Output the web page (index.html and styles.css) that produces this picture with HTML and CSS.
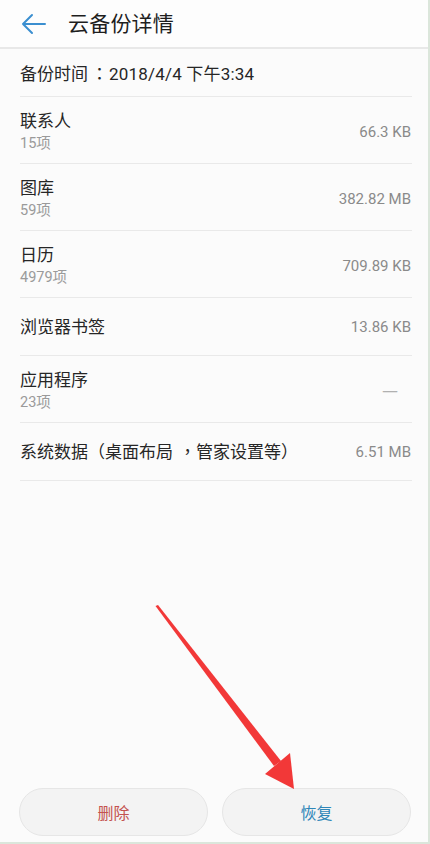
FILE: index.html
```html
<!DOCTYPE html>
<html lang="zh-CN">
<head>
<meta charset="utf-8">
<link rel="stylesheet" href="styles.css">
</head>
<body>
<div class="page">
  <header class="topbar">
    <svg class="back" width="26" height="22" viewBox="0 0 26 22">
      <path d="M3 11 H25 M12 2 L3 11 L12 20" fill="none" stroke="#3b8fd0" stroke-width="2" stroke-linecap="round" stroke-linejoin="round"/>
    </svg>
    <h1 class="title">云备份详情</h1>
  </header>
  <div class="list">
    <div class="time-row">备份时间<span class="cp colon" lang="zh-TW">：</span><span class="stamp">2018/4/4 下午3:34</span></div>
    <div class="row two">
      <div class="info"><div class="name">联系人</div><div class="sub">15项</div></div>
      <div class="val">66.3 KB</div>
    </div>
    <div class="row two">
      <div class="info"><div class="name">图库</div><div class="sub">59项</div></div>
      <div class="val">382.82 MB</div>
    </div>
    <div class="row two">
      <div class="info"><div class="name">日历</div><div class="sub">4979项</div></div>
      <div class="val">709.89 KB</div>
    </div>
    <div class="row one">
      <div class="info"><div class="name">浏览器书签</div></div>
      <div class="val">13.86 KB</div>
    </div>
    <div class="row two">
      <div class="info"><div class="name">应用程序</div><div class="sub">23项</div></div>
      <div class="val dash">—</div>
    </div>
    <div class="row one">
      <div class="info"><div class="name">系统数据（桌面布局<span class="cp comma" lang="zh-TW">，</span>管家设置等）</div></div>
      <div class="val">6.51 MB</div>
    </div>
  </div>
  <div class="spacer"></div>
  <div class="actions">
    <button class="btn del">删除</button>
    <button class="btn restore">恢复</button>
  </div>
  <svg class="pointer" width="430" height="844" viewBox="0 0 430 844">
    <polygon points="155.5,606 158,605 281,761 274,766" fill="#f23838"/>
    <polygon points="265,774 290,753 294,789" fill="#f23838"/>
  </svg>
</div>
</body>
</html>
```

FILE: styles.css
```css
html, body {
  margin: 0;
  padding: 0;
}
body {
  background: #fafafa;
  font-family: Roboto, "Noto Sans CJK SC", sans-serif;
  color: #222;
}
.page {
  position: relative;
  width: 428px;
  height: 842px;
  border-right: 2px solid #dbe6db;
  border-bottom: 2px solid #dbe6db;
  background: #fbfbfb;
  display: flex;
  flex-direction: column;
  overflow: hidden;
}
.topbar {
  height: 47px;
  display: flex;
  align-items: center;
  background: #fdfdfd;
  border-bottom: 2px solid #e8e8e8;
  flex-shrink: 0;
}
.back {
  margin-left: 20px;
  margin-top: 1px;
}
.title {
  margin: 0 0 3px 22px;
  font-size: 21px;
  font-weight: 400;
  color: #1e1e1e;
  letter-spacing: 0.2px;
}
.list {
  padding: 0 16px 0 20px;
}
.time-row {
  height: 47px;
  line-height: 48px;
  font-size: 17px;
  color: #262626;
  border-bottom: 1px solid #e9e9e9;
}
.stamp {
  letter-spacing: 0.2px;
}
.cp {
  font-family: "Noto Sans CJK TC", sans-serif;
}
.cp.colon {
  padding: 0 1px 0 3px;
}
.cp.comma {
  padding: 0 0 0 6px;
}
.row {
  display: flex;
  align-items: center;
  justify-content: space-between;
  border-bottom: 1px solid #e9e9e9;
  box-sizing: border-box;
}
.row.two {
  height: 67px;
  padding-top: 3px;
}
.row.one {
  height: 58px;
}
.name {
  font-size: 17px;
  line-height: 24px;
  color: #262626;
}
.sub {
  font-size: 14.5px;
  line-height: 22px;
  color: #9a9a9a;
}
.val {
  font-size: 15px;
  color: #8a8a8a;
  padding-right: 1px;
}
.val.dash {
  font-family: "Noto Sans CJK SC", sans-serif;
  color: #b0b0b0;
  padding-right: 14px;
  font-size: 18px;
  margin-top: -3px;
}
.spacer {
  flex: 1;
}
.actions {
  display: flex;
  gap: 14px;
  padding: 0 17px 6px 19px;
}
.btn {
  flex: 1;
  height: 48px;
  border-radius: 24px;
  border: 1px solid #e6e6e6;
  background: #f3f3f3;
  font-family: "Noto Sans CJK SC", sans-serif;
  font-size: 16px;
  padding: 0;
}
.btn.del {
  color: #c4524f;
}
.btn.restore {
  color: #2e86b8;
}
.pointer {
  position: absolute;
  left: 0;
  top: 0;
  pointer-events: none;
}
```
